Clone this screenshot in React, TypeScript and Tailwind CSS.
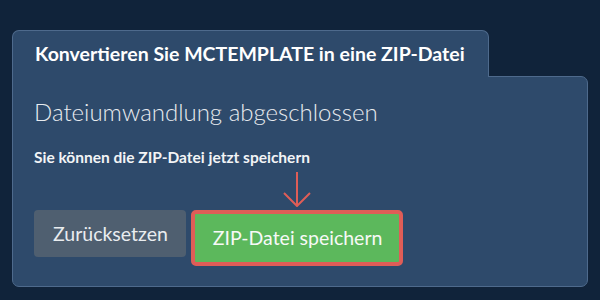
import React from 'react';

function DownArrow() {
  return (
    <svg width="30" height="35" viewBox="0 0 30 35" fill="none" className="block">
      <line x1="15" y1="0" x2="15" y2="34" stroke="#df5d57" strokeWidth="2" />
      <polyline points="2,21 15,34 28,21" stroke="#df5d57" strokeWidth="2" fill="none" />
    </svg>
  );
}

export default function App() {
  return (
    <div className="w-[600px] h-[300px] bg-[#10233a] pt-[30px] pl-[12px] font-['Lato','Liberation_Sans',sans-serif]">
      {/* Tab */}
      <div className="relative z-10 -mb-px w-[477px] h-[47px] bg-[#2e4a6b] border border-b-0 border-[#4e6a8c] rounded-t-[7px] pl-[22px] pt-[11px]">
        <h1 className="text-[19.5px] leading-[24px] font-bold text-white">
          Konvertieren Sie MCTEMPLATE in eine ZIP-Datei
        </h1>
      </div>

      {/* Panel */}
      <div className="w-[576px] h-[211px] bg-[#2e4a6b] border border-[#4e6a8c] rounded-b-[7px] rounded-tr-[7px] pl-[21px] pt-[20px]">
        <h2 className="text-[24px] leading-[29px] font-light text-[#e8ebef]">
          Dateiumwandlung abgeschlossen
        </h2>
        <p className="mt-[22px] text-[15.5px] leading-[19px] font-bold text-[#f2f4f6]">
          Sie können die ZIP-Datei jetzt speichern
        </p>

        <div className="mt-[43px] flex items-start gap-[5px]">
          <button className="h-[47px] rounded-[4px] bg-[#4f5f70] pl-[19px] pr-[18px] pt-[12px] pb-[11px] text-[19.5px] leading-[24px] text-[#e9ecef]">
            Zurücksetzen
          </button>
          <div className="relative">
            <div className="absolute bottom-full left-1/2 -translate-x-1/2 mb-[3px]">
              <DownArrow />
            </div>
            <button className="h-[56px] rounded-[5px] border-[4px] border-[#df5d57] bg-[#5cb85c] pl-[18px] pr-[17px] pt-[12px] pb-[12px] text-[19.5px] leading-[24px] text-[#f7f9f7]">
              ZIP-Datei speichern
            </button>
          </div>
        </div>
      </div>
    </div>
  );
}
